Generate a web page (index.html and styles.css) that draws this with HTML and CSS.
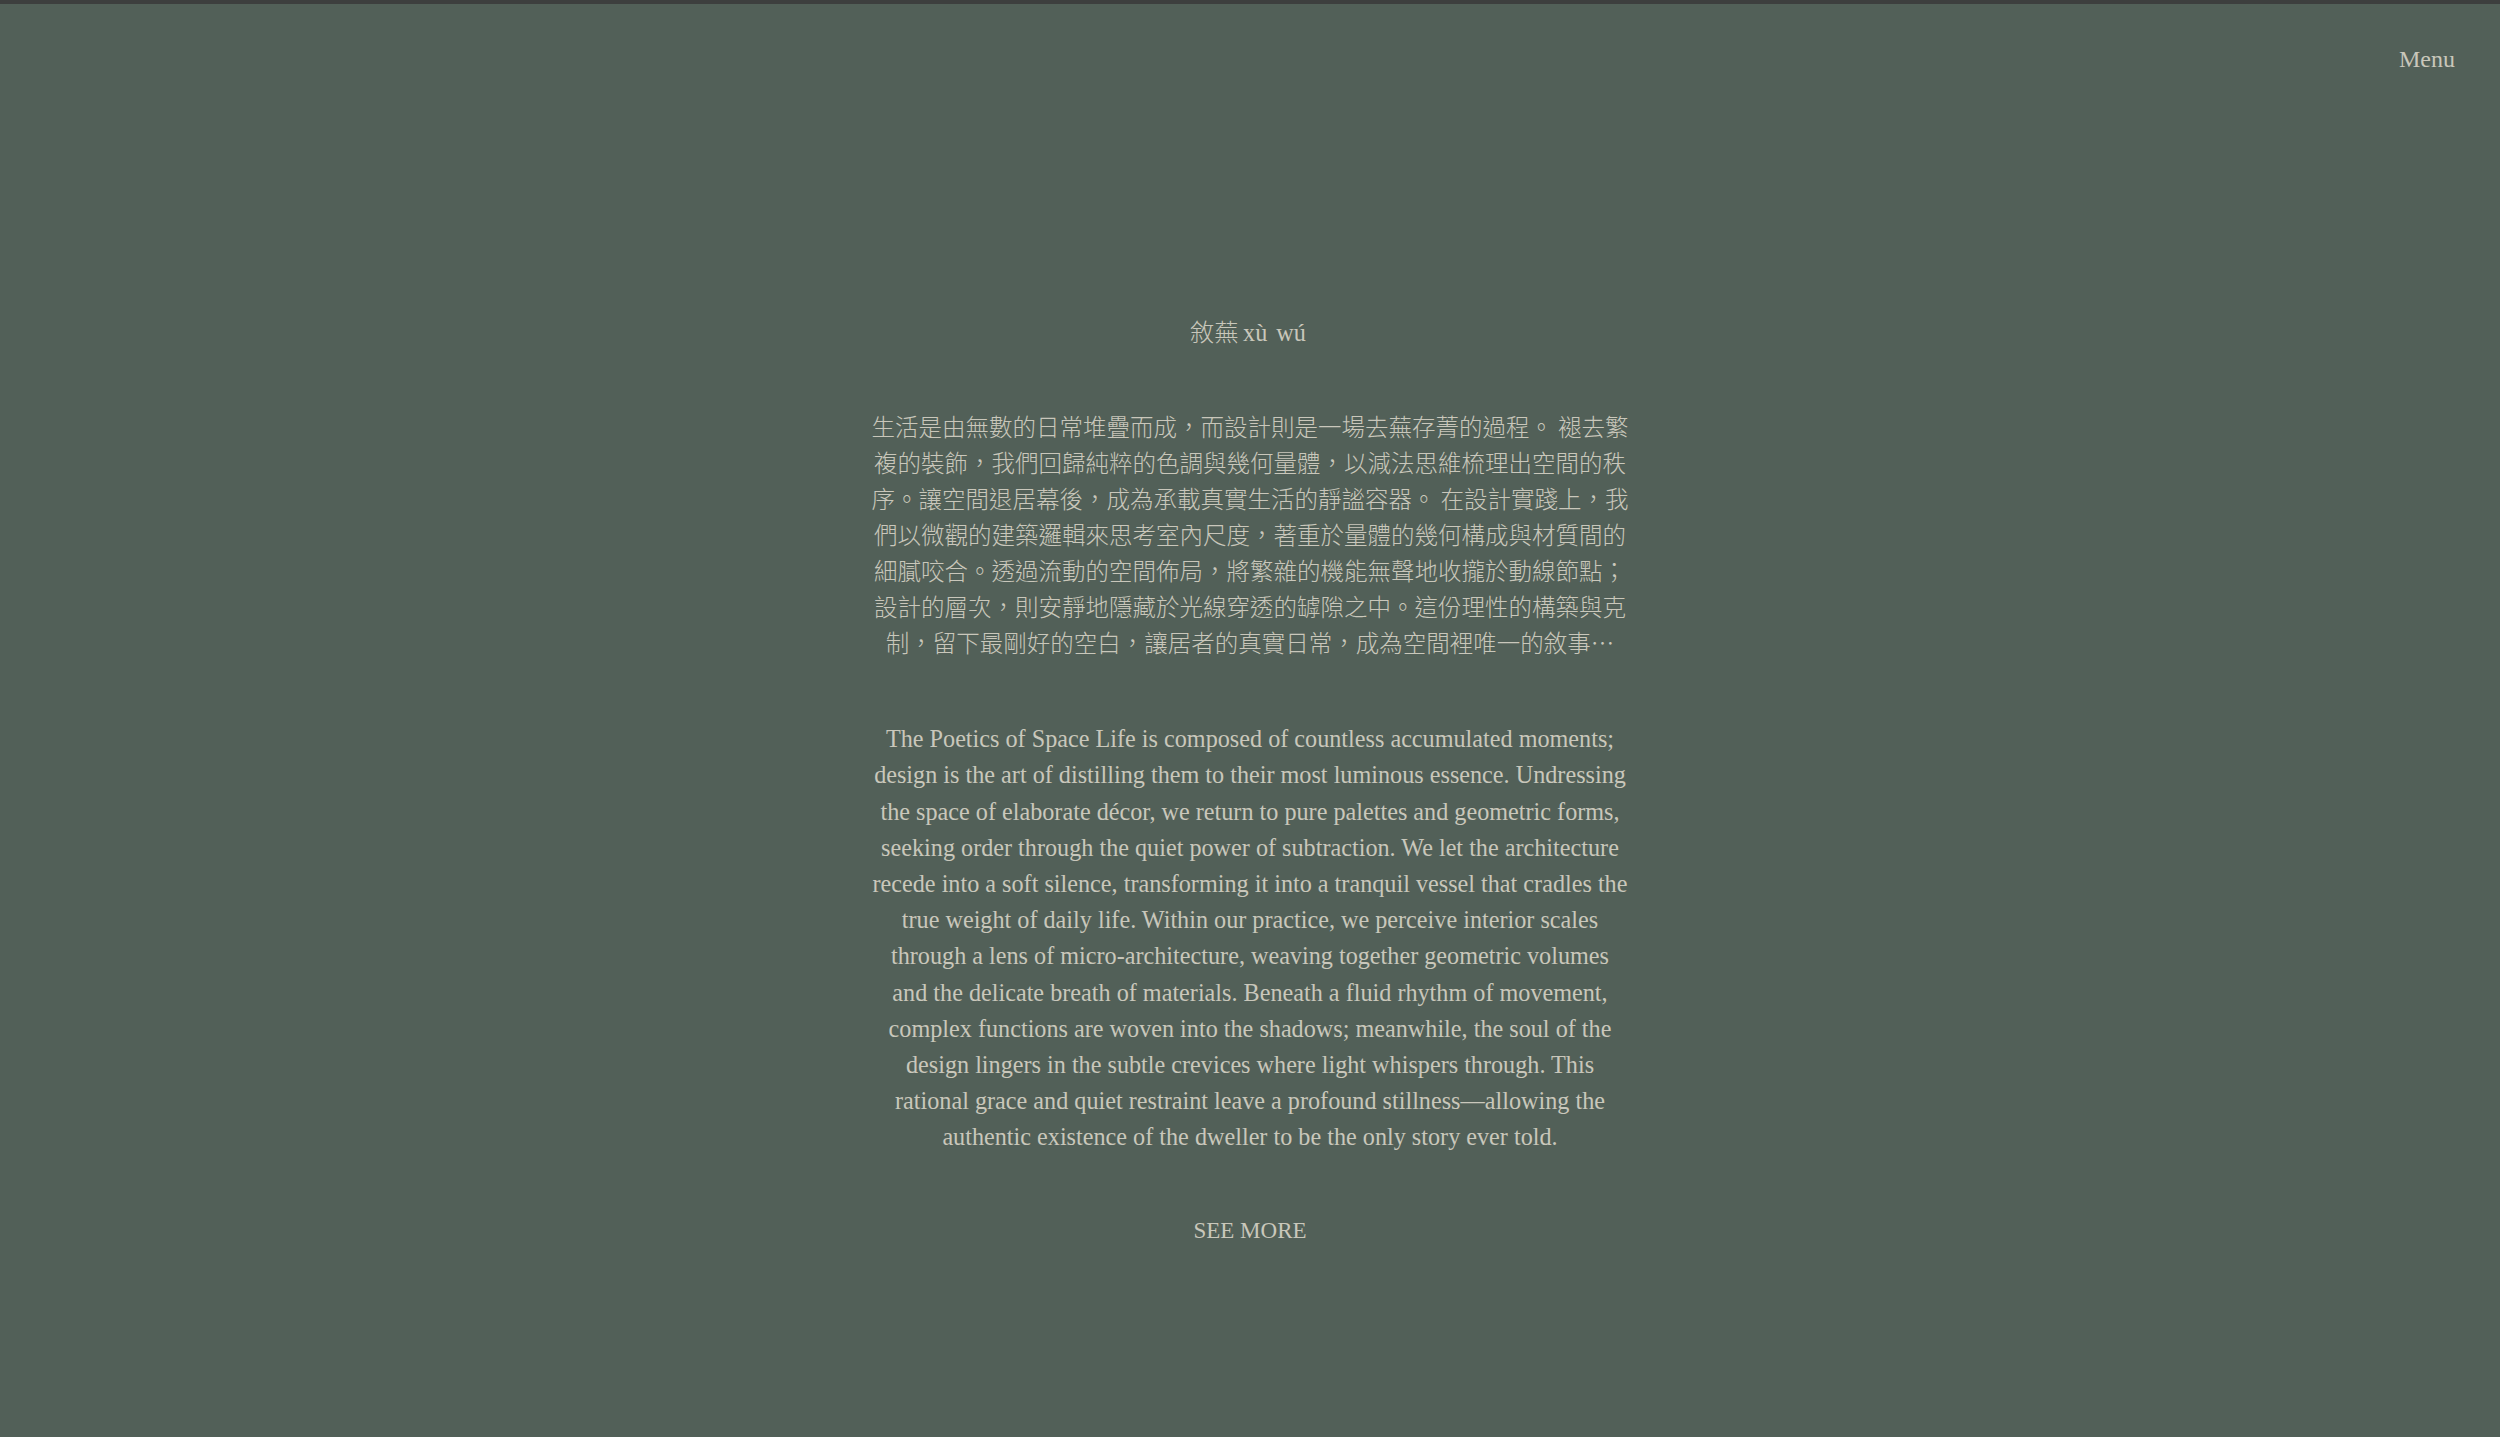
FILE: index.html
```html
<!DOCTYPE html>
<html lang="zh-Hant">
<head>
<meta charset="utf-8">
<title>敘蕪 xù wú</title>
<link rel="stylesheet" href="styles.css">
</head>
<body>
<header class="topbar">
  <a class="menu" href="#">Menu</a>
</header>
<main class="intro">
  <h1 class="title">敘蕪 xù&nbsp; wú</h1>
  <p class="text-zh">生活是由無數的日常堆疊而成，而設計則是一場去蕪存菁的過程。 褪去繁<br>複的裝飾，我們回歸純粹的色調與幾何量體，以減法思維梳理出空間的秩<br>序。讓空間退居幕後，成為承載真實生活的靜謐容器。 在設計實踐上，我<br>們以微觀的建築邏輯來思考室內尺度，著重於量體的幾何構成與材質間的<br>細膩咬合。透過流動的空間佈局，將繁雜的機能無聲地收攏於動線節點；<br>設計的層次，則安靜地隱藏於光線穿透的罅隙之中。這份理性的構築與克<br>制，留下最剛好的空白，讓居者的真實日常，成為空間裡唯一的敘事⋯</p>
  <p class="text-en">The Poetics of Space Life is composed of countless accumulated moments;<br>design is the art of distilling them to their most luminous essence. Undressing<br>the space of elaborate décor, we return to pure palettes and geometric forms,<br>seeking order through the quiet power of subtraction. We let the architecture<br>recede into a soft silence, transforming it into a tranquil vessel that cradles the<br>true weight of daily life. Within our practice, we perceive interior scales<br>through a lens of micro-architecture, weaving together geometric volumes<br>and the delicate breath of materials. Beneath a fluid rhythm of movement,<br>complex functions are woven into the shadows; meanwhile, the soul of the<br>design lingers in the subtle crevices where light whispers through. This<br>rational grace and quiet restraint leave a profound stillness—allowing the<br>authentic existence of the dweller to be the only story ever told.</p>
  <a class="see-more" href="#">SEE MORE</a>
</main>
</body>
</html>
```
FILE: styles.css
```css
html, body {
  margin: 0;
  padding: 0;
}
body {
  min-height: 1433px;
  background: #526058;
  border-top: 4px solid #3d3f3e;
  color: #c9c7bb;
  font-family: "Liberation Serif", "Noto Sans CJK TC", serif;
  font-size: 24.2px;
  line-height: 36.2px;
}
a {
  color: inherit;
  text-decoration: none;
}
.topbar {
  display: flex;
  justify-content: flex-end;
  padding: 36.5px 45px 0 0;
}
.menu {
  font-size: 24px;
}
.intro {
  display: flex;
  flex-direction: column;
  align-items: center;
  text-align: center;
  margin-top: 238.5px;
}
.title {
  margin: 0 0 56.4px;
  font-size: 24.2px;
  font-weight: 300;
  line-height: 36.2px;
  word-spacing: -1.5px;
  transform: translateX(-2px);
}
.text-zh {
  width: 790px;
  margin: 0 0 60.8px;
  font-family: "Noto Sans CJK TC", "Liberation Serif", sans-serif;
  font-size: 23.5px;
  font-weight: 300;
  line-height: 36.1px;
}
.text-en {
  width: 790px;
  margin: 0 0 57.6px;
}
.see-more {
  font-size: 23px;
}
```
